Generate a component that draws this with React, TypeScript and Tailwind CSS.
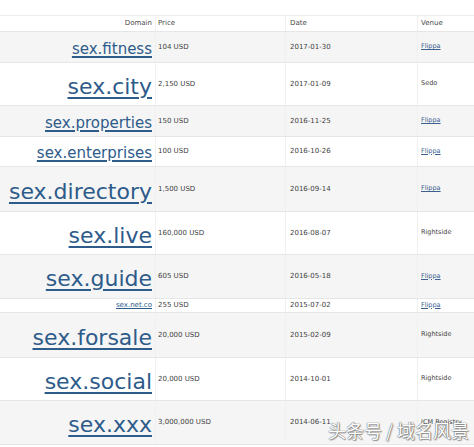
import React from "react";

type Row = {
  domain: string;
  size: "lg" | "md" | "sm";
  price: string;
  date: string;
  venue: string;
  venueLink: boolean;
  h: string;
  gray: boolean;
};

const rows: Row[] = [
  { domain: "sex.fitness", size: "md", price: "104 USD", date: "2017-01-30", venue: "Flippa", venueLink: true, h: "h-[31px]", gray: true },
  { domain: "sex.city", size: "lg", price: "2,150 USD", date: "2017-01-09", venue: "Sedo", venueLink: false, h: "h-[43px]", gray: false },
  { domain: "sex.properties", size: "md", price: "150 USD", date: "2016-11-25", venue: "Flippa", venueLink: true, h: "h-[31px]", gray: true },
  { domain: "sex.enterprises", size: "md", price: "100 USD", date: "2016-10-26", venue: "Flippa", venueLink: true, h: "h-[30px]", gray: false },
  { domain: "sex.directory", size: "lg", price: "1,500 USD", date: "2016-09-14", venue: "Flippa", venueLink: true, h: "h-[45px]", gray: true },
  { domain: "sex.live", size: "lg", price: "160,000 USD", date: "2016-08-07", venue: "Rightside", venueLink: false, h: "h-[43px]", gray: false },
  { domain: "sex.guide", size: "lg", price: "605 USD", date: "2016-05-18", venue: "Flippa", venueLink: true, h: "h-[44px]", gray: true },
  { domain: "sex.net.co", size: "sm", price: "255 USD", date: "2015-07-02", venue: "Flippa", venueLink: true, h: "h-[14px]", gray: false },
  { domain: "sex.forsale", size: "lg", price: "20,000 USD", date: "2015-02-09", venue: "Rightside", venueLink: false, h: "h-[45px]", gray: true },
  { domain: "sex.social", size: "lg", price: "20,000 USD", date: "2014-10-01", venue: "Rightside", venueLink: false, h: "h-[43px]", gray: false },
  { domain: "sex.xxx", size: "lg", price: "3,000,000 USD", date: "2014-06-11", venue: "ICM Registry", venueLink: false, h: "h-[44px]", gray: true },
];

const sizeClass = {
  lg: "text-[22px] leading-none pt-[5px] decoration-[2px] underline-offset-[3px]",
  md: "text-[15px] leading-none pt-[4px] decoration-[1.5px] underline-offset-[2px]",
  sm: "text-[7px] leading-none decoration-[0.5px] underline-offset-[1px]",
};

const grid = "grid grid-cols-[156px_130px_132px_1fr]";

export default function App() {
  return (
    <div
      className="relative w-[474px] h-[447px] overflow-hidden bg-white pt-[15px]"
      style={{ fontFamily: '"DejaVu Sans", Verdana, sans-serif' }}
    >
      <div className="border-t border-[#ececec]">
        <div className={`${grid} h-[16px] border-b border-[#e6e6e6] bg-white text-[7px] text-[#4a4a4a]`}>
          <div className="flex items-center justify-end pr-[3px] border-r border-[#f0f0f0]">Domain</div>
          <div className="flex items-center pl-[2px] border-r border-[#f0f0f0]">Price</div>
          <div className="flex items-center pl-[4px] border-r border-[#f0f0f0]">Date</div>
          <div className="flex items-center pl-[3px]">Venue</div>
        </div>
        {rows.map((r) => (
          <div
            key={r.domain}
            className={`${grid} ${r.h} border-b border-[#e6e6e6] ${r.gray ? "bg-[#f5f5f5]" : "bg-white"} text-[7px] text-[#3f3f3f]`}
          >
            <div className="flex items-center justify-end pr-[3px] border-r border-[#f0f0f0] overflow-visible">
              <a className={`text-[#2d5b8a] underline whitespace-nowrap ${sizeClass[r.size]}`}>{r.domain}</a>
            </div>
            <div className="flex items-center pl-[2px] border-r border-[#f0f0f0] whitespace-nowrap">{r.price}</div>
            <div className="flex items-center pl-[4px] border-r border-[#f0f0f0]">{r.date}</div>
            <div className="flex items-center pl-[3px] whitespace-nowrap">
              {r.venueLink ? (
                <a className="text-[6.5px] text-[#3b5f8e] underline">{r.venue}</a>
              ) : (
                <span className="text-[6.5px]">{r.venue}</span>
              )}
            </div>
          </div>
        ))}
      </div>
      <div
        className="absolute left-[328px] top-[421px] text-[18px] leading-none text-white whitespace-nowrap [text-shadow:0_0_1px_#666,0_0_1px_#666,1px_1px_1px_#999]"
        style={{ fontFamily: '"Noto Sans CJK SC", sans-serif' }}
      >
        头条号 / 域名风景
      </div>
    </div>
  );
}
